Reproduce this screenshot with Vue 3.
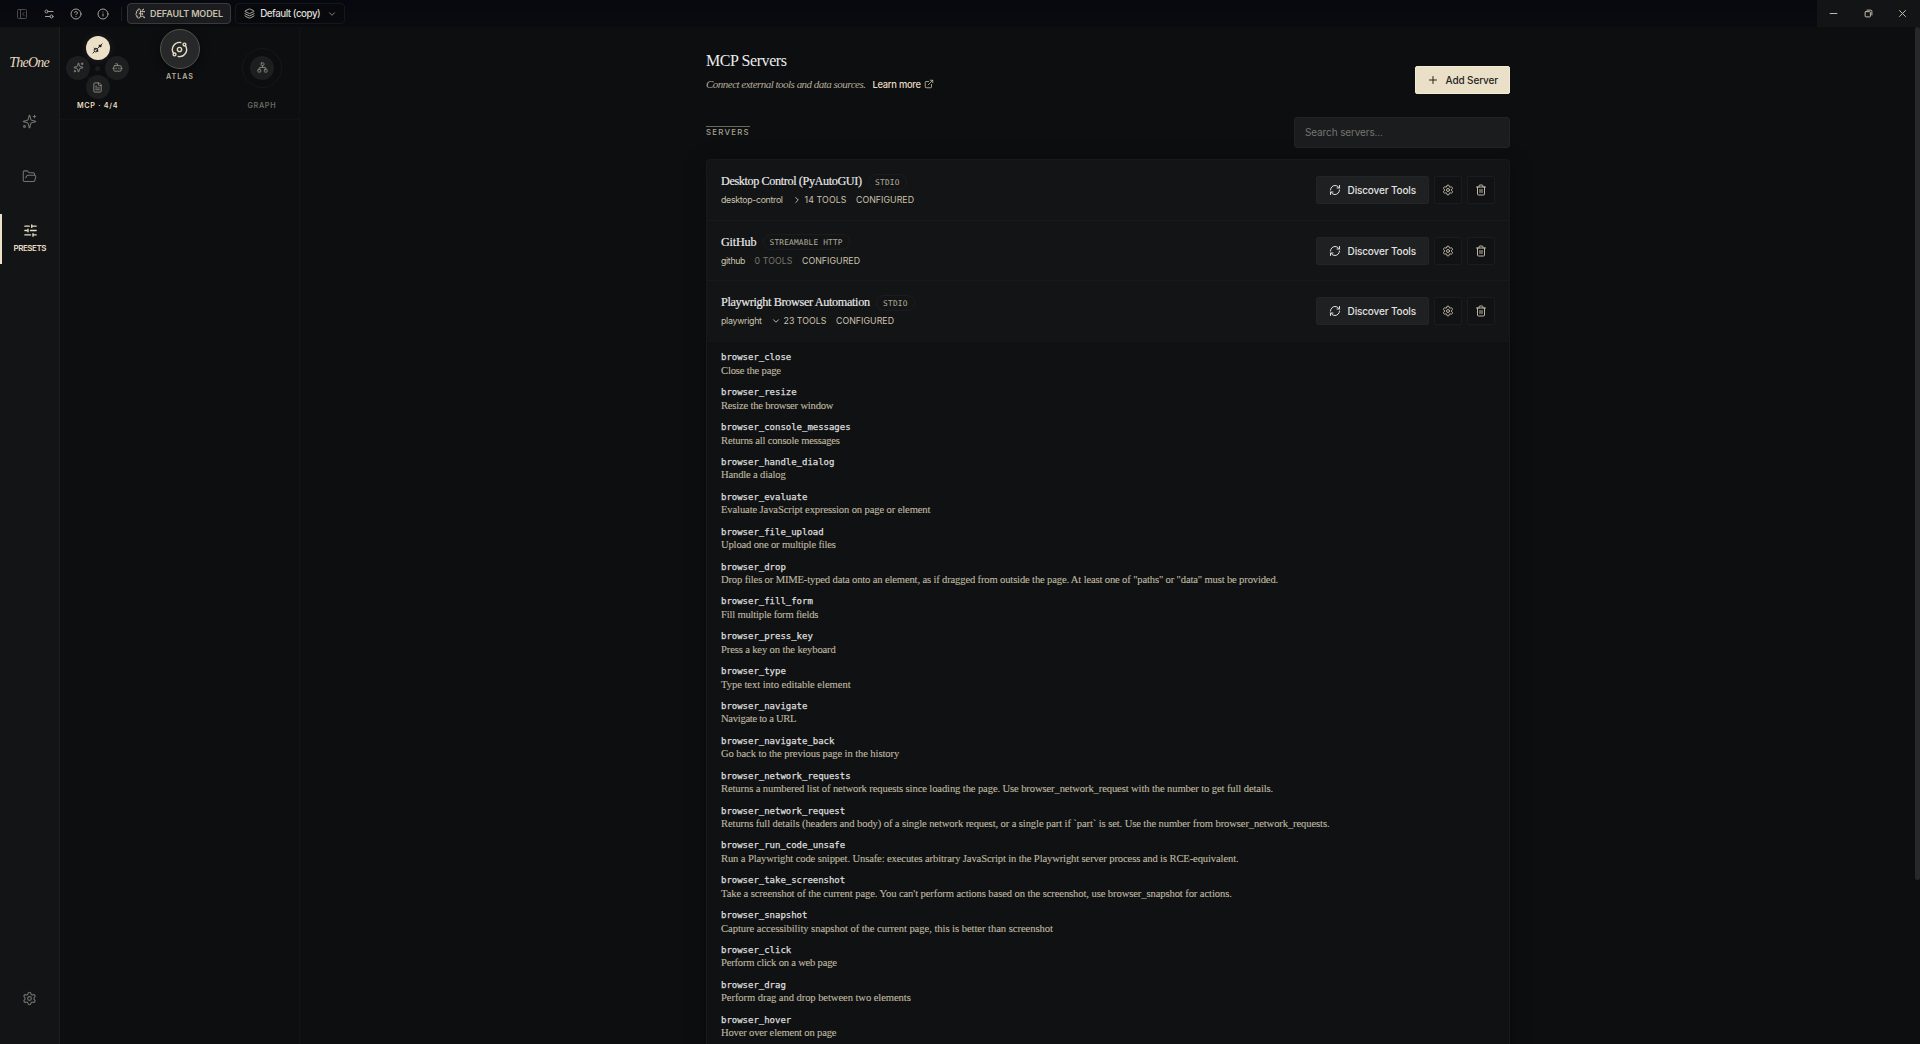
<script setup>
const icons = {
  panel: '<rect x="3" y="3" width="18" height="18" rx="2"/><path d="M9 3v18M16 15l-3-3 3-3"/>',
  toggles: '<path d="M20 7h-9M14 17H5"/><circle cx="17" cy="17" r="3"/><circle cx="7" cy="7" r="3"/>',
  help: '<circle cx="12" cy="12" r="10"/><path d="M9.09 9a3 3 0 0 1 5.83 1c0 2-3 3-3 3M12 17h.01"/>',
  info: '<circle cx="12" cy="12" r="10"/><path d="M12 16v-4M12 8h.01"/>',
  brain: '<path d="M12 5a3 3 0 1 0-5.997.125 4 4 0 0 0-2.526 5.77 4 4 0 0 0 .556 6.588A4 4 0 1 0 12 18Z"/><path d="M9 13a4.500 4.500 0 0 0 3-4M6.003 5.125A3 3 0 0 0 6.401 6.500M3.477 10.896a4 4 0 0 1 .585-.396M6 18a4 4 0 0 1-1.967-.516M12 13h4M12 18h6a2 2 0 0 1 2 2v1M12 8h8M16 8V5a2 2 0 0 1 2-2"/><circle cx="16" cy="13" r=".5"/><circle cx="18" cy="3" r=".5"/><circle cx="20" cy="21" r=".5"/><circle cx="20" cy="8" r=".5"/>',
  layers: '<path d="M12.830 2.180a2 2 0 0 0-1.660 0L2.600 6.080a1 1 0 0 0 0 1.830l8.580 3.910a2 2 0 0 0 1.660 0l8.580-3.900a1 1 0 0 0 0-1.830z"/><path d="M2 12a1 1 0 0 0 .58.910l8.600 3.910a2 2 0 0 0 1.650 0l8.580-3.900A1 1 0 0 0 22 12"/><path d="M2 17a1 1 0 0 0 .58.910l8.600 3.910a2 2 0 0 0 1.650 0l8.580-3.900A1 1 0 0 0 22 17"/>',
  down: '<path d="m6 9 6 6 6-6"/>',
  right: '<path d="m9 18 6-6-6-6"/>',
  sparkles: '<path d="M9.937 15.500A2 2 0 0 0 8.500 14.063l-6.135-1.582a.5.5 0 0 1 0-.962L8.500 9.936A2 2 0 0 0 9.937 8.500l1.582-6.135a.5.5 0 0 1 .963 0L14.063 8.500A2 2 0 0 0 15.500 9.937l6.135 1.581a.5.5 0 0 1 0 .964L15.500 14.063a2 2 0 0 0-1.437 1.437l-1.582 6.135a.5.5 0 0 1-.963 0z"/><path d="M20 2v4M22 4h-4"/><circle cx="4" cy="20" r="1.500"/>',
  folder: '<path d="m6 14 1.500-2.900A2 2 0 0 1 9.240 10H20a2 2 0 0 1 1.940 2.500l-1.540 6a2 2 0 0 1-1.950 1.500H4a2 2 0 0 1-2-2V5a2 2 0 0 1 2-2h3.900a2 2 0 0 1 1.690.9l.81 1.200a2 2 0 0 0 1.670.9H18a2 2 0 0 1 2 2v2"/>',
  sliders: '<path d="M10 5H3M12 19H3M14 3v4M16 17v4M21 12h-9M21 19h-5M21 5h-7M8 10v4M8 12H3"/>',
  gear: '<path d="M9.671 4.136a2.340 2.340 0 0 1 4.659 0 2.340 2.340 0 0 0 3.319 1.915 2.340 2.340 0 0 1 2.330 4.033 2.340 2.340 0 0 0 0 3.831 2.340 2.340 0 0 1-2.330 4.033 2.340 2.340 0 0 0-3.319 1.915 2.340 2.340 0 0 1-4.659 0 2.340 2.340 0 0 0-3.320-1.915 2.340 2.340 0 0 1-2.330-4.033 2.340 2.340 0 0 0 0-3.831A2.340 2.340 0 0 1 6.350 6.051a2.340 2.340 0 0 0 3.319-1.915"/><circle cx="12" cy="12" r="3"/>',
  plug: '<circle cx="8.500" cy="15.500" r="4"/><path d="M2 22l3.500-3.500M5 11l8 8M12 12l2.500-2.500M16 5l3 3M20 4l2-2"/><circle cx="17.500" cy="6.500" r="2.200" fill="currentColor"/>',
  bot: '<path d="M12 8V4H8"/><rect x="4" y="8" width="16" height="12" rx="2"/><path d="M2 14h2M20 14h2M15 13v2M9 13v2"/>',
  file: '<path d="M15 2H6a2 2 0 0 0-2 2v16a2 2 0 0 0 2 2h12a2 2 0 0 0 2-2V7Z"/><path d="M14 2v4a2 2 0 0 0 2 2h4M10 9H8M16 13H8M16 17H8"/>',
  orbit: '<path d="M20.341 6.484A10 10 0 0 1 10.266 21.850M3.659 17.516A10 10 0 0 1 13.740 2.152"/><circle cx="12" cy="12" r="3"/><circle cx="19" cy="5" r="2"/><circle cx="5" cy="19" r="2"/>',
  network: '<rect x="16" y="16" width="6" height="6" rx="1"/><rect x="2" y="16" width="6" height="6" rx="1"/><rect x="9" y="2" width="6" height="6" rx="1"/><path d="M5 16v-3a1 1 0 0 1 1-1h12a1 1 0 0 1 1 1v3M12 12V8"/>',
  refresh: '<path d="M3 12a9 9 0 0 1 9-9 9.750 9.750 0 0 1 6.740 2.740L21 8M21 3v5h-5M21 12a9 9 0 0 1-9 9 9.750 9.750 0 0 1-6.740-2.740L3 16M8 16H3v5"/>',
  trash: '<path d="M3 6h18M19 6v14a2 2 0 0 1-2 2H7a2 2 0 0 1-2-2V6M8 6V4a2 2 0 0 1 2-2h4a2 2 0 0 1 2 2v2M10 11v6M14 11v6"/>',
  plus: '<path d="M5 12h14M12 5v14"/>',
  external: '<path d="M15 3h6v6M10 14 21 3M18 13v6a2 2 0 0 1-2 2H5a2 2 0 0 1-2-2V8a2 2 0 0 1 2-2h6"/>',
  minus: '<path d="M3 12h18"/>',
  restore: '<rect x="3" y="7" width="14" height="14" rx="2"/><path d="M8 3h10a3 3 0 0 1 3 3v10"/>',
  close: '<path d="M4 4l16 16M20 4 4 20"/>',
}

// Tracks a single line of text out to a fixed measure.
const vFit = {
  mounted(el, { value }) {
    const natural = el.getBoundingClientRect().width
    const gaps = Math.max(1, el.textContent.trim().length - 1)
    el.style.letterSpacing = `${(value - natural) / gaps}px`
    el.style.width = `${value}px`
  },
}

const servers = [
  { name: 'Desktop Control (PyAutoGUI)', nameW: 141, kind: 'STDIO', kindW: 24.5, id: 'desktop-control', idW: 62, arrow: 'right', tools: '14 TOOLS', toolsW: 42 },
  { name: 'GitHub', nameW: 35.5, kind: 'STREAMABLE HTTP', kindW: 73, id: 'github', idW: 24.5, tools: '0 TOOLS', toolsW: 38 },
  { name: 'Playwright Browser Automation', nameW: 149, kind: 'STDIO', kindW: 24.5, id: 'playwright', idW: 41, arrow: 'down', tools: '23 TOOLS', toolsW: 43 },
]

const tools = [
  ['browser_close', 'Close the page', 60],
  ['browser_resize', 'Resize the browser window', 112.5],
  ['browser_console_messages', 'Returns all console messages', 119],
  ['browser_handle_dialog', 'Handle a dialog', 64.7],
  ['browser_evaluate', 'Evaluate JavaScript expression on page or element', 209.5],
  ['browser_file_upload', 'Upload one or multiple files', 115],
  ['browser_drop', 'Drop files or MIME-typed data onto an element, as if dragged from outside the page. At least one of "paths" or "data" must be provided.', 557.2],
  ['browser_fill_form', 'Fill multiple form fields', 97.5],
  ['browser_press_key', 'Press a key on the keyboard', 114.8],
  ['browser_type', 'Type text into editable element', 129.6],
  ['browser_navigate', 'Navigate to a URL', 75.5],
  ['browser_navigate_back', 'Go back to the previous page in the history', 178.2],
  ['browser_network_requests', 'Returns a numbered list of network requests since loading the page. Use browser_network_request with the number to get full details.', 552.2],
  ['browser_network_request', 'Returns full details (headers and body) of a single network request, or a single part if `part` is set. Use the number from browser_network_requests.', 608.6],
  ['browser_run_code_unsafe', 'Run a Playwright code snippet. Unsafe: executes arbitrary JavaScript in the Playwright server process and is RCE-equivalent.', 517.6],
  ['browser_take_screenshot', "Take a screenshot of the current page. You can't perform actions based on the screenshot, use browser_snapshot for actions.", 510.8],
  ['browser_snapshot', 'Capture accessibility snapshot of the current page, this is better than screenshot', 332],
  ['browser_click', 'Perform click on a web page', 116],
  ['browser_drag', 'Perform drag and drop between two elements', 189.8],
  ['browser_hover', 'Hover over element on page', 115.5],
]
</script>

<template>
  <div class="app">
    <header class="titlebar">
      <div class="tools-left">
        <svg class="ic i12 faint" viewBox="0 0 24 24" v-html="icons.panel" />
        <svg class="ic i12" viewBox="0 0 24 24" v-html="icons.toggles" />
        <svg class="ic i12" viewBox="0 0 24 24" v-html="icons.help" />
        <svg class="ic i12" viewBox="0 0 24 24" v-html="icons.info" />
      </div>
      <i class="sep"></i>
      <button class="model">
        <svg class="ic i11" viewBox="0 0 24 24" v-html="icons.brain" />
        <span v-fit="73" class="t">DEFAULT MODEL</span>
      </button>
      <button class="preset">
        <svg class="ic i11" viewBox="0 0 24 24" v-html="icons.layers" />
        <span v-fit="60.5" class="t">Default (copy)</span>
        <svg class="ic i10" viewBox="0 0 24 24" v-html="icons.down" />
      </button>
      <div class="window">
        <svg class="ic i9" viewBox="0 0 24 24" v-html="icons.minus" />
        <svg class="ic i9" viewBox="0 0 24 24" v-html="icons.restore" />
        <svg class="ic i9" viewBox="0 0 24 24" v-html="icons.close" />
      </div>
    </header>

    <div class="body">
      <nav class="rail">
        <div class="logo"><span v-fit="40.5" class="t">TheOne</span></div>
        <div class="nav n1"><svg class="ic i15" viewBox="0 0 24 24" v-html="icons.sparkles" /></div>
        <div class="nav n2"><svg class="ic i15" viewBox="0 0 24 24" v-html="icons.folder" /></div>
        <div class="nav active">
          <svg class="ic i15" viewBox="0 0 24 24" v-html="icons.sliders" />
          <span v-fit="33" class="t">PRESETS</span>
        </div>
        <div class="nav bottom"><svg class="ic i15" viewBox="0 0 24 24" v-html="icons.gear" /></div>
      </nav>

      <aside class="side">
        <div class="orbit">
          <svg class="links" viewBox="0 0 64 64"><path d="M32 12.500 51.500 32 32 51.500 12.500 32z" /></svg>
          <i class="core"></i>
          <div class="node top"><svg class="ic i11" viewBox="0 0 24 24" v-html="icons.plug" /></div>
          <div class="node left"><svg class="ic i11" viewBox="0 0 24 24" v-html="icons.sparkles" /></div>
          <div class="node rgt"><svg class="ic i11" viewBox="0 0 24 24" v-html="icons.bot" /></div>
          <div class="node low"><svg class="ic i11" viewBox="0 0 24 24" v-html="icons.file" /></div>
          <div class="atlas"><svg class="ic i17" viewBox="0 0 24 24" v-html="icons.orbit" /></div>
          <div class="graph"><div><svg class="ic i11" viewBox="0 0 24 24" v-html="icons.network" /></div></div>
          <span v-fit="40.5" class="t lab l-mcp">MCP · 4/4</span>
          <span v-fit="27" class="t lab l-atlas">ATLAS</span>
          <span v-fit="28" class="t lab l-graph">GRAPH</span>
        </div>
      </aside>

      <main class="main">
        <section class="content">
          <div class="head">
            <div class="intro">
              <h1><span v-fit="81" class="t">MCP Servers</span></h1>
              <p>
                <em v-fit="160" class="t">Connect external tools and data sources.</em>
                <a><span v-fit="48.5" class="t">Learn more</span><svg class="ic i10" viewBox="0 0 24 24" v-html="icons.external" /></a>
              </p>
            </div>
            <button class="add">
              <svg class="ic i12" viewBox="0 0 24 24" v-html="icons.plus" />
              <span v-fit="52.500" class="t">Add Server</span>
            </button>
          </div>
          <div class="filter">
            <h2><span v-fit="42.500" class="t">SERVERS</span></h2>
            <div class="search"><span v-fit="78" class="t">Search servers...</span></div>
          </div>

          <div class="card">
            <div v-for="s in servers" :key="s.id" class="server">
              <div class="info">
                <div class="name">
                  <span v-fit="s.nameW" class="t title">{{ s.name }}</span>
                  <span class="badge"><span v-fit="s.kindW" class="t">{{ s.kind }}</span></span>
                </div>
                <div class="meta">
                  <span v-fit="s.idW" class="t">{{ s.id }}</span>
                  <svg v-if="s.arrow" class="ic i10 arrow" viewBox="0 0 24 24" v-html="icons[s.arrow]" />
                  <span v-fit="s.toolsW" class="t count" :class="{ none: !s.arrow }">{{ s.tools }}</span>
                  <span v-fit="58" class="t conf">CONFIGURED</span>
                </div>
              </div>
              <div class="actions">
                <button class="discover">
                  <svg class="ic i12" viewBox="0 0 24 24" v-html="icons.refresh" />
                  <span v-fit="68.500" class="t">Discover Tools</span>
                </button>
                <button class="sq"><svg class="ic i12" viewBox="0 0 24 24" v-html="icons.gear" /></button>
                <button class="sq"><svg class="ic i12" viewBox="0 0 24 24" v-html="icons.trash" /></button>
              </div>
            </div>
            <ul class="list">
              <li v-for="[name, text, w] in tools" :key="name">
                <code>{{ name }}</code>
                <p><span v-fit="w" class="t">{{ text }}</span></p>
              </li>
            </ul>
          </div>
        </section>
        <i class="scroll"></i>
      </main>
    </div>
  </div>
</template>

<style>
body { background: #0d0e10; overflow: hidden; }
</style>

<style scoped>
* { box-sizing: border-box; margin: 0; padding: 0; }
.app { height: 1044px; width: 1920px; overflow: hidden; display: flex; flex-direction: column; background: #0d0e10; color: #e6e6e6; font-family: Inter, sans-serif; }
button { font-family: inherit; display: flex; align-items: center; border: 1px solid transparent; flex: none; }
.t { display: inline-block; white-space: nowrap; flex: none; }
.ic { display: block; flex: none; fill: none; stroke: currentColor; stroke-width: 2; stroke-linecap: round; stroke-linejoin: round; }
.i9 { width: 9px; height: 9px; }
.i10 { width: 10px; height: 10px; }
.i11 { width: 11px; height: 11px; }
.i12 { width: 12px; height: 12px; }
.i15 { width: 15px; height: 15px; }
.i17 { width: 17px; height: 17px; }

.titlebar { height: 27px; flex: none; display: flex; align-items: center; background: linear-gradient(#06080f, #0a0b0f); }
.tools-left { display: flex; gap: 15px; padding-left: 16px; color: #a8a294; }
.faint { color: #4c4b4a; }
.sep { width: 1px; height: 14px; background: #1d1e22; margin: 0 5px 0 12px; }
.model { width: 104px; height: 21px; border-color: #3b3a38; border-radius: 4px; background: #1b1c1f; color: #c8c0ac; padding-left: 7px; gap: 4px; font-size: 9px; font-weight: 600; }
.preset { width: 110px; height: 21px; margin-left: 4px; border-color: #15171c; border-radius: 4px; background: #08090d; color: #dedcd6; padding-left: 7.500px; gap: 5.500px; font-size: 9.800px; font-weight: 500; }
.preset .i11 { color: #b8b2a4; }
.preset .i10 { margin-left: 1px; color: #9d988d; }
.window { margin-left: auto; width: 103px; height: 27px; background: #131416; display: flex; align-items: center; padding-left: 12px; gap: 25.500px; color: #c5bfb0; }
.window .ic { stroke-width: 2.600; }

.body { flex: 1; min-height: 0; display: flex; }
.rail { width: 60px; background: #131416; border-right: 1px solid #1d1e20; display: flex; flex-direction: column; align-items: center; color: #74736f; padding-bottom: 38px; }
.logo { height: 66px; padding-top: 26px; font: italic 14px/20px "Liberation Serif", serif; color: #e6dcc0; }
.nav { width: 60px; display: flex; flex-direction: column; align-items: center; }
.nav .ic { stroke-width: 1.700; }
.n1 { height: 55px; padding-top: 21px; }
.n2 { height: 66px; padding-top: 21px; }
.active { height: 50px; border-left: 2px solid #ece2c8; padding: 9px 1px 0 0; color: #e6dcc2; font-size: 8px; line-height: 10px; font-weight: 600; gap: 5px; }
.active .ic { stroke-width: 2.200; }
.bottom { margin-top: auto; }

.side { width: 240px; border-right: 1px solid #121315; }
.orbit { position: relative; height: 93px; border-bottom: 1px solid #121315; }
.links { position: absolute; left: 5.500px; top: 9px; width: 64px; height: 64px; fill: none; stroke: #1b1c1e; }
.core { position: absolute; left: 35px; top: 38.500px; width: 5px; height: 5px; border-radius: 50%; background: #1c1d1f; }
.node, .graph div { width: 24px; height: 24px; border-radius: 50%; background: #1d1e20; color: #918d84; display: flex; align-items: center; justify-content: center; }
.node { position: absolute; }
.top { left: 25.500px; top: 9px; background: #ece1c8; color: #1a1917; box-shadow: 0 0 8px rgba(236, 225, 200, .1); }
.left { left: 6px; top: 28.500px; }
.rgt { left: 45px; top: 28.500px; }
.low { left: 25.500px; top: 48px; }
.atlas { position: absolute; left: 99.600px; top: 2px; width: 40px; height: 40px; border-radius: 50%; background: #27282a; border: 1px solid #55534f; color: #e6dcc2; display: flex; align-items: center; justify-content: center; box-shadow: 0 2px 8px rgba(0, 0, 0, .5); }
.graph { position: absolute; left: 182px; top: 20.500px; width: 40px; height: 40px; border-radius: 50%; border: 1px solid #17181a; display: flex; align-items: center; justify-content: center; color: #8a867d; }
.graph div { color: #8a867d; }
.lab { position: absolute; font-size: 7.200px; line-height: 10px; font-weight: 600; }
.l-mcp { left: 17px; top: 74px; color: #e8dec4; }
.l-atlas { left: 106px; top: 44.500px; color: #b5ad9a; }
.l-graph { left: 187.500px; top: 74px; color: #6b6862; }

.main { flex: 1; min-width: 0; display: flex; justify-content: space-between; }
.content { width: 804px; margin-left: 406px; }
.head { display: flex; justify-content: space-between; height: 90px; }
h1 { font: 400 16px/22px "Liberation Serif", serif; color: #ececec; margin-top: 23px; }
.intro p { display: flex; align-items: center; margin-top: 4px; height: 16px; }
.intro em { font: italic 11px/16px "Liberation Serif", serif; color: #b3ab99; }
.intro a { display: flex; align-items: center; margin-left: 6.500px; gap: 3px; font-size: 9.400px; font-weight: 500; color: #e6dcc2; }
.intro a .ic { color: #c4bca8; }
.add { width: 95px; height: 28px; margin-top: 39px; background: #eae0c8; border-color: #f3ead2; border-radius: 2px; color: #25231f; font-size: 10px; font-weight: 500; padding-left: 11px; gap: 6.500px; }
.filter { display: flex; justify-content: space-between; height: 42px; }
h2 { height: 14px; margin-top: 9px; border-top: 1px solid #6b675d; font-size: 7.800px; line-height: 11px; font-weight: 500; color: #aaa391; width: 44px; }
.search { width: 216px; height: 31px; border: 1px solid #222325; border-radius: 3px; background: #1b1c1e; color: #76746f; font-size: 10px; line-height: 29px; padding-left: 10px; }

.card { height: 900px; background: #131416; border: 1px solid #18191b; border-radius: 4px; box-shadow: 0 4px 22px rgba(0, 0, 0, .32); }
.server { height: 60.600px; border-bottom: 1px solid #18191b; display: flex; justify-content: space-between; padding: 0 14px; }
.info { padding-top: 13px; }
.name { display: flex; align-items: center; height: 17px; gap: 6px; }
.title { font: 400 12.200px/17px "Liberation Serif", serif; color: #ececec; -webkit-text-stroke: .15px currentColor; }
.badge { height: 16px; border: 1px solid #1b1c1e; border-radius: 8px; padding: 0 6px; font: 7.800px/15px "DejaVu Sans Mono", monospace; color: #b5ad9a; display: flex; }
.meta { display: flex; align-items: center; height: 13px; margin-top: 3px; font-size: 8.800px; line-height: 13px; color: #cbc3ad; }
.arrow { margin-left: 9px; margin-right: -6.500px; color: #bdb5a0; stroke-width: 2.400; }
.count { margin-left: 9px; }
.none { color: #77746d; }
.conf { margin-left: 9.500px; }
.actions { display: flex; align-items: center; gap: 5px; padding-top: .8px; }
.discover { width: 113px; height: 28px; background: #1e2022; border-color: #222426; border-radius: 2px; color: #e2e2e0; font-size: 10px; font-weight: 500; padding-left: 12px; gap: 6.500px; }
.sq { width: 28px; height: 28px; background: #111214; border-color: #1b1c1e; border-radius: 2px; color: #bdb5a4; justify-content: center; }
.server:nth-child(3) { border-color: #141517; }
.list { list-style: none; background: #101113; padding: 9.600px 14px 0; height: 717px; }
li { height: 34.870px; }
code { display: block; font: 9px/13px "DejaVu Sans Mono", monospace; letter-spacing: -.02px; color: #dedede; -webkit-text-stroke: .25px currentColor; }
li p { font: 10.600px/13px "Liberation Serif", serif; color: #bfb7a0; margin-top: -.6px; -webkit-text-stroke: .12px currentColor; }
.scroll { width: 5px; height: 853px; background: #27282a; border-radius: 3px; }
</style>
